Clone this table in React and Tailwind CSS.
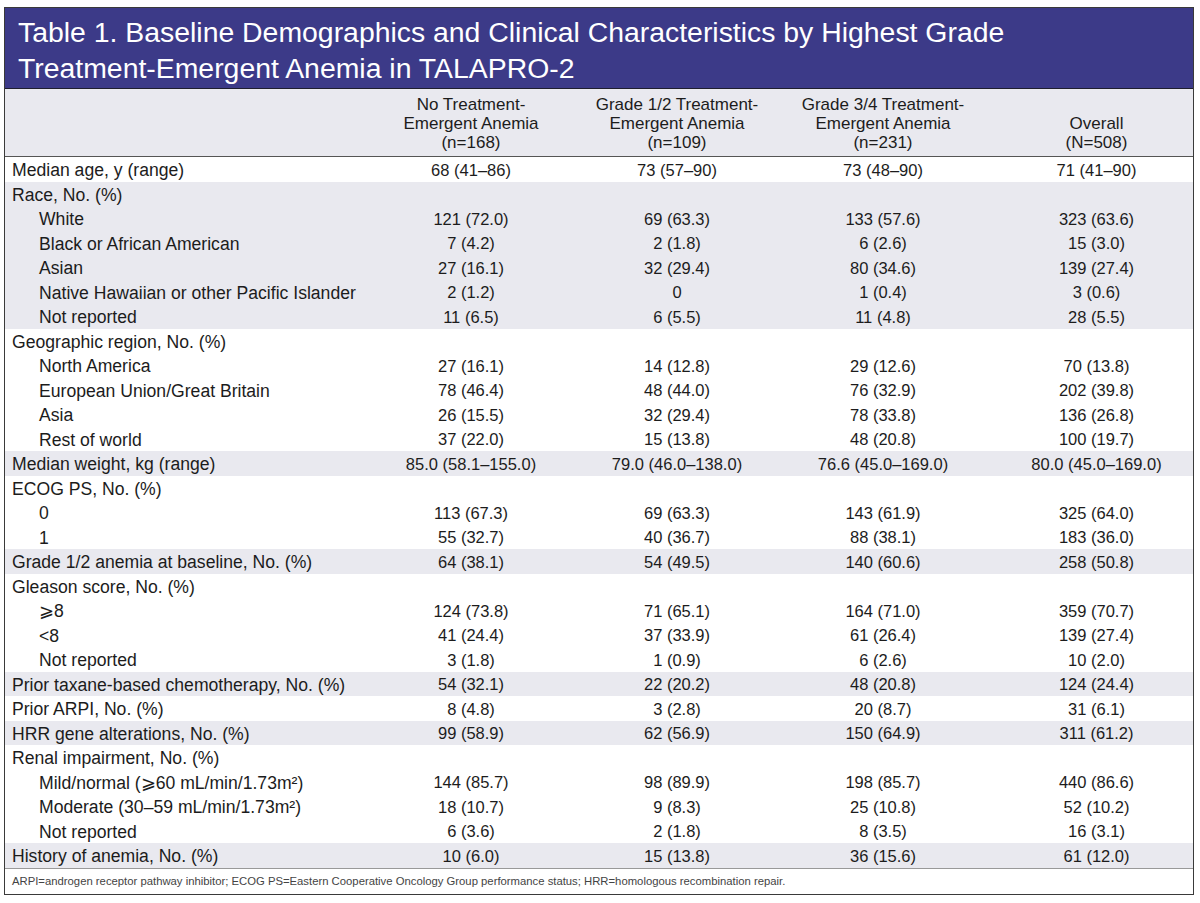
const sections = [
  { band: false, rows: [{ label: 'Median age, y (range)', vals: ['68 (41–86)', '73 (57–90)', '73 (48–90)', '71 (41–90)'] }] },
  {
    band: true,
    rows: [
      { label: 'Race, No. (%)' },
      { label: 'White', sub: true, vals: ['121 (72.0)', '69 (63.3)', '133 (57.6)', '323 (63.6)'] },
      { label: 'Black or African American', sub: true, vals: ['7 (4.2)', '2 (1.8)', '6 (2.6)', '15 (3.0)'] },
      { label: 'Asian', sub: true, vals: ['27 (16.1)', '32 (29.4)', '80 (34.6)', '139 (27.4)'] },
      { label: 'Native Hawaiian or other Pacific Islander', sub: true, vals: ['2 (1.2)', '0', '1 (0.4)', '3 (0.6)'] },
      { label: 'Not reported', sub: true, vals: ['11 (6.5)', '6 (5.5)', '11 (4.8)', '28 (5.5)'] },
    ],
  },
  {
    band: false,
    rows: [
      { label: 'Geographic region, No. (%)' },
      { label: 'North America', sub: true, vals: ['27 (16.1)', '14 (12.8)', '29 (12.6)', '70 (13.8)'] },
      { label: 'European Union/Great Britain', sub: true, vals: ['78 (46.4)', '48 (44.0)', '76 (32.9)', '202 (39.8)'] },
      { label: 'Asia', sub: true, vals: ['26 (15.5)', '32 (29.4)', '78 (33.8)', '136 (26.8)'] },
      { label: 'Rest of world', sub: true, vals: ['37 (22.0)', '15 (13.8)', '48 (20.8)', '100 (19.7)'] },
    ],
  },
  { band: true, rows: [{ label: 'Median weight, kg (range)', vals: ['85.0 (58.1–155.0)', '79.0 (46.0–138.0)', '76.6 (45.0–169.0)', '80.0 (45.0–169.0)'] }] },
  {
    band: false,
    rows: [
      { label: 'ECOG PS, No. (%)' },
      { label: '0', sub: true, vals: ['113 (67.3)', '69 (63.3)', '143 (61.9)', '325 (64.0)'] },
      { label: '1', sub: true, vals: ['55 (32.7)', '40 (36.7)', '88 (38.1)', '183 (36.0)'] },
    ],
  },
  { band: true, rows: [{ label: 'Grade 1/2 anemia at baseline, No. (%)', vals: ['64 (38.1)', '54 (49.5)', '140 (60.6)', '258 (50.8)'] }] },
  {
    band: false,
    rows: [
      { label: 'Gleason score, No. (%)' },
      { label: '⩾8', sub: true, vals: ['124 (73.8)', '71 (65.1)', '164 (71.0)', '359 (70.7)'] },
      { label: '<8', sub: true, vals: ['41 (24.4)', '37 (33.9)', '61 (26.4)', '139 (27.4)'] },
      { label: 'Not reported', sub: true, vals: ['3 (1.8)', '1 (0.9)', '6 (2.6)', '10 (2.0)'] },
    ],
  },
  { band: true, rows: [{ label: 'Prior taxane-based chemotherapy, No. (%)', vals: ['54 (32.1)', '22 (20.2)', '48 (20.8)', '124 (24.4)'] }] },
  { band: false, rows: [{ label: 'Prior ARPI, No. (%)', vals: ['8 (4.8)', '3 (2.8)', '20 (8.7)', '31 (6.1)'] }] },
  { band: true, rows: [{ label: 'HRR gene alterations, No. (%)', vals: ['99 (58.9)', '62 (56.9)', '150 (64.9)', '311 (61.2)'] }] },
  {
    band: false,
    rows: [
      { label: 'Renal impairment, No. (%)' },
      { label: 'Mild/normal (⩾60 mL/min/1.73m²)', sub: true, vals: ['144 (85.7)', '98 (89.9)', '198 (85.7)', '440 (86.6)'] },
      { label: 'Moderate (30–59 mL/min/1.73m²)', sub: true, vals: ['18 (10.7)', '9 (8.3)', '25 (10.8)', '52 (10.2)'] },
      { label: 'Not reported', sub: true, vals: ['6 (3.6)', '2 (1.8)', '8 (3.5)', '16 (3.1)'] },
    ],
  },
  { band: true, rows: [{ label: 'History of anemia, No. (%)', vals: ['10 (6.0)', '15 (13.8)', '36 (15.6)', '61 (12.0)'] }] },
];

const heads = [
  ['No Treatment-', 'Emergent Anemia', '(n=168)'],
  ['Grade 1/2 Treatment-', 'Emergent Anemia', '(n=109)'],
  ['Grade 3/4 Treatment-', 'Emergent Anemia', '(n=231)'],
  ['Overall', '(N=508)'],
];

const grid = 'grid grid-cols-[363px_206px_206px_206px_1fr]';

const Row = ({ row, band }) => (
  <div className={`${grid} h-[24.5px] items-center ${band ? 'bg-[#e9e9ef]' : 'bg-white'}`}>
    <div className={`${row.sub ? 'pl-[34px]' : 'pl-[7px]'} whitespace-nowrap text-[17.6px]`}>{row.label}</div>
    {(row.vals || ['', '', '', '']).map((v, i) => (
      <div key={i} className={`text-center whitespace-nowrap ${i === 3 ? 'pl-[14px]' : ''}`}>{v}</div>
    ))}
  </div>
);

const App = () => {
  return (
    <div className="w-[1200px] h-[903px] bg-white pt-[7px] pl-[4px] font-['Liberation_Sans',Arial,sans-serif] text-[#1c1c1c]">
      <div className="w-[1190px] border border-[#3a3a3a]">
        <div className="h-[81px] bg-[#3c3a88] text-white text-[28.4px] leading-[36px] pl-[13px] pt-[6px] border-b border-[#1e1e2e]">
          <div>Table 1. Baseline Demographics and Clinical Characteristics by Highest Grade</div>
          <div>Treatment-Emergent Anemia in TALAPRO-2</div>
        </div>
        <div className={`${grid} h-[68px] items-end bg-[#e9e9ef] border-b border-[#555] pb-[4px] text-[17px] leading-[19px]`}>
          <div />
          {heads.map((h, i) => (
            <div key={i} className={`text-center ${i === 3 ? 'pl-[14px]' : ''}`}>
              {h.map((l, j) => (
                <div key={j}>{l}</div>
              ))}
            </div>
          ))}
        </div>
        <div className="text-[16.5px]">
          {sections.map((s, si) =>
            s.rows.map((r, ri) => <Row key={`${si}-${ri}`} row={r} band={s.band} />)
          )}
        </div>
        <div className="h-[26px] flex items-center pl-[7px] border-t border-[#999] text-[11.3px] text-[#444]">
          ARPI=androgen receptor pathway inhibitor; ECOG PS=Eastern Cooperative Oncology Group performance status; HRR=homologous recombination repair.
        </div>
      </div>
    </div>
  );
};

export default App;
